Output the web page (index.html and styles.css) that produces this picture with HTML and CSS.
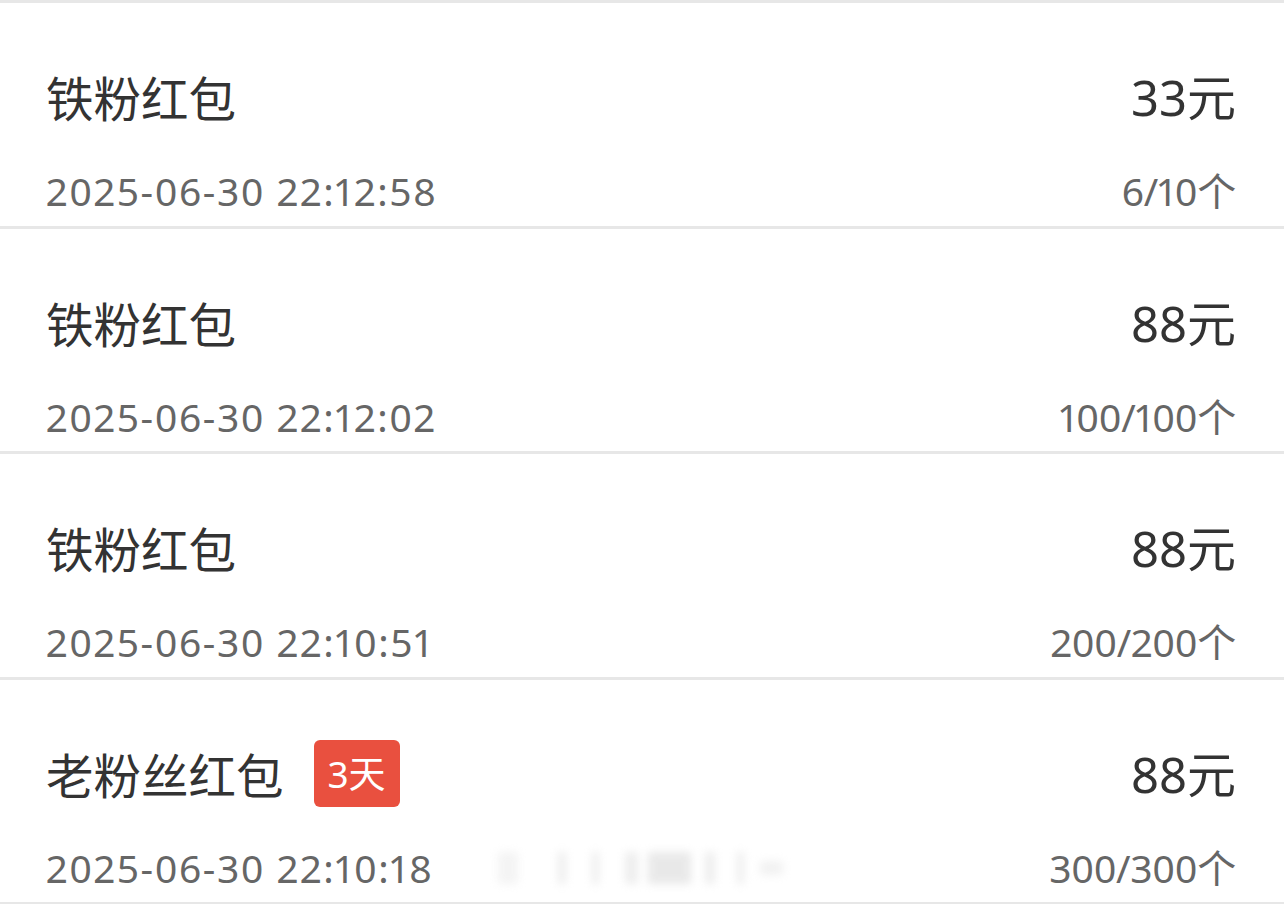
FILE: index.html
```html
<!DOCTYPE html>
<html lang="zh-CN">
<head>
<meta charset="utf-8">
<title>红包记录</title>
<link rel="stylesheet" href="styles.css">
</head>
<body>
<div class="list">
  <div class="row">
    <div class="line">
      <div class="title">铁粉红包</div>
      <div class="amount">33元</div>
    </div>
    <div class="line sub">
      <div class="date">2025-06-30 22:12:58</div>
      <div class="count">6/10个</div>
    </div>
  </div>
  <div class="row">
    <div class="line">
      <div class="title">铁粉红包</div>
      <div class="amount">88元</div>
    </div>
    <div class="line sub">
      <div class="date">2025-06-30 22:12:02</div>
      <div class="count">100/100个</div>
    </div>
  </div>
  <div class="row">
    <div class="line">
      <div class="title">铁粉红包</div>
      <div class="amount">88元</div>
    </div>
    <div class="line sub">
      <div class="date">2025-06-30 22:10:51</div>
      <div class="count">200/200个</div>
    </div>
  </div>
  <div class="row">
    <div class="line">
      <div class="title-wrap">
        <div class="title">老粉丝红包</div>
        <span class="badge">3天</span>
      </div>
      <div class="amount">88元</div>
    </div>
    <div class="line sub">
      <div class="date-wrap">
        <div class="date">2025-06-30 22:10:18</div>
        <div class="smudge" aria-hidden="true">
          <i class="b1"></i><i class="b2"></i><i class="b3"></i><i class="b4"></i><i class="b5"></i><i class="b6"></i><i class="b7"></i><i class="b8"></i>
        </div>
      </div>
      <div class="count">300/300个</div>
    </div>
  </div>
</div>
</body>
</html>
```
FILE: styles.css
```css
html, body {
  margin: 0;
  padding: 0;
  background: #ffffff;
}

body {
  font-family: "Noto Sans", "Noto Sans CJK SC", sans-serif;
  width: 1284px;
  height: 904px;
  overflow: hidden;
}

.list {
  border-top: 3px solid #e7e7e7;
}

.row {
  box-sizing: border-box;
  height: 225.5px;
  padding: 62px 48px 0 46px;
  border-bottom: 3px solid #e7e7e7;
  display: flex;
  flex-direction: column;
  gap: 38px;
}

.line {
  display: flex;
  align-items: center;
  justify-content: space-between;
  height: 64px;
}

.line.sub {
  height: 48px;
}

.title {
  font-family: "Noto Sans CJK SC", sans-serif;
  font-size: 47.5px;
  color: #333333;
  line-height: 64px;
}

.amount {
  font-family: "Noto Sans", "Noto Sans CJK SC", sans-serif;
  font-size: 49px;
  color: #333333;
  line-height: 64px;
}

.title-wrap {
  display: flex;
  align-items: center;
  gap: 30px;
}

.badge {
  display: flex;
  align-items: center;
  justify-content: center;
  width: 86px;
  height: 67px;
  border-radius: 6px;
  background: #e9503f;
  color: #ffffff;
  font-family: "Noto Sans", "Noto Sans CJK SC", sans-serif;
  font-size: 37px;
  line-height: 1;
}

.date, .count {
  font-family: "Noto Sans", "Noto Sans CJK SC", sans-serif;
  font-size: 39px;
  color: #666666;
  line-height: 48px;
  font-variant-numeric: proportional-nums;
}

.date {
  letter-spacing: 1.55px;
}

.count {
  letter-spacing: -0.3px;
}

.date-wrap {
  display: flex;
  align-items: center;
  gap: 64px;
}

.smudge {
  display: flex;
  align-items: center;
  width: 285px;
  height: 36px;
  filter: blur(4px);
  opacity: 0.4;
}

.smudge i {
  display: block;
  height: 32px;
  background: #d4d4d4;
}

.smudge .b1 { width: 22px; margin-right: 40px; background: #e4e4e4; }
.smudge .b2 { width: 8px; margin-right: 26px; }
.smudge .b3 { width: 8px; margin-right: 26px; }
.smudge .b4 { width: 14px; margin-right: 10px; }
.smudge .b5 { width: 46px; margin-right: 14px; background: #c8c8c8; }
.smudge .b6 { width: 10px; margin-right: 22px; }
.smudge .b7 { width: 8px; margin-right: 16px; }
.smudge .b8 { width: 24px; height: 14px; background: #dedede; }
```
